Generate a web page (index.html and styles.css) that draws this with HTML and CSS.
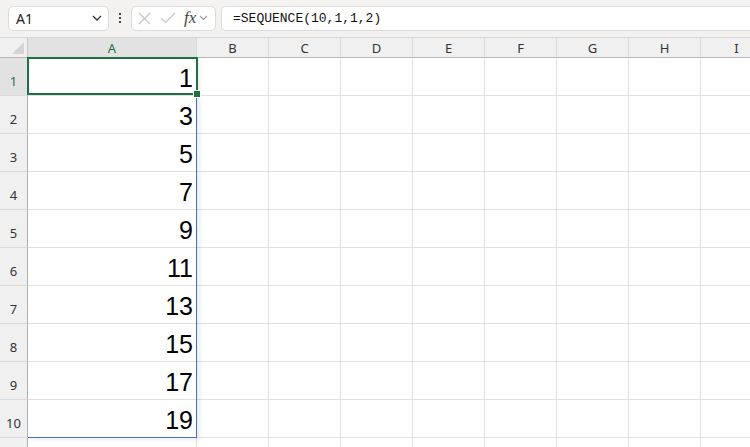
FILE: index.html
```html
<!DOCTYPE html>
<html lang="en">
<head>
    <meta charset="UTF-8">
    <title>Book1 - Sheet1</title>
    <link rel="stylesheet" href="styles.css">
</head>
<body>
    <!-- Name box, function buttons and formula input -->
    <div class="formula-bar">
        <div class="name-box">
            <span>A1</span>
            <svg class="chev" width="10" height="6" viewBox="0 0 10 6"><path d="M1 1l4 4 4-4" fill="none" stroke="#333" stroke-width="1.3"/></svg>
        </div>
        <div class="more">
            <i></i><i></i><i></i>
        </div>
        <div class="fx-box">
            <svg width="13" height="13" viewBox="0 0 13 13"><path d="M1 1l11 11M12 1L1 12" stroke="#c4c4c4" stroke-width="1.2"/></svg>
            <svg width="16" height="12" viewBox="0 0 16 12"><path d="M1 6l4.5 4.5L15 1" fill="none" stroke="#c4c4c4" stroke-width="1.2"/></svg>
            <span class="fx">fx</span>
            <svg width="9" height="6" viewBox="0 0 9 6"><path d="M1 1l3.5 3.5L8 1" fill="none" stroke="#999" stroke-width="1.1"/></svg>
        </div>
        <div class="formula-input">=SEQUENCE(10,1,1,2)</div>
    </div>

    <!-- Sheet grid -->
    <div class="sheet" id="sheet"></div>

    <script>
        const columns = ['A', 'B', 'C', 'D', 'E', 'F', 'G', 'H', 'I'];
        const rowCount = 11;
        const sheet = document.getElementById('sheet');

        // =SEQUENCE(10,1,1,2)
        const values = [];
        for (let i = 0; i < 10; i++) values.push(1 + i * 2);

        // header row
        let html = '<div class="corner"><span class="tri"></span></div>';
        columns.forEach(col => {
            const sel = col === 'A' ? ' selected' : '';
            html += `<div class="col-head${sel}">${col}</div>`;
        });

        for (let r = 1; r <= rowCount; r++) {
            const sel = r === 1 ? ' selected' : '';
            html += `<div class="row-head${sel}">${r}</div>`;
            columns.forEach(col => {
                if (col === 'A') {
                    const v = values[r - 1];
                    if (r === 1) {
                        html += `<div class="cell num active">${v}<span class="spill"></span><span class="select"><span class="handle"></span></span></div>`;
                    } else {
                        html += `<div class="cell num">${v !== undefined ? v : ''}</div>`;
                    }
                } else {
                    html += '<div class="cell"></div>';
                }
            });
        }
        sheet.innerHTML = html;
    </script>
</body>
</html>
```

FILE: styles.css
```css
body {
    margin: 0;
    height: 447px;
    overflow: hidden;
    background-color: #ffffff;
    font-family: 'Noto Sans', 'Open Sans', sans-serif;
    color: #333;
}

/* top bar */
.formula-bar {
    height: 38px;
    box-sizing: border-box;
    background-color: #f4f1f1;
    display: flex;
    align-items: center;
    padding-left: 8px;
    padding-bottom: 1px;
    border-bottom: 1px solid #d6d6d6;
}
.name-box {
    width: 101px;
    height: 25px;
    box-sizing: border-box;
    background-color: #ffffff;
    border: 1px solid #dcdcdc;
    border-radius: 5px;
    display: flex;
    align-items: center;
    justify-content: space-between;
    padding: 0 6px 0 7px;
    font-size: 14px;
    color: #222;
}
.more {
    width: 22px;
    display: flex;
    flex-direction: column;
    align-items: center;
    gap: 2px;
}
.more i {
    display: block;
    width: 2px;
    height: 2px;
    background-color: #444;
}
.fx-box {
    width: 85px;
    height: 25px;
    box-sizing: border-box;
    background-color: #ffffff;
    border: 1px solid #dcdcdc;
    border-radius: 5px;
    display: flex;
    align-items: center;
    padding-left: 6px;
    gap: 9px;
}
.fx-box .fx {
    font-family: 'Liberation Serif', serif;
    font-style: italic;
    font-size: 17px;
    color: #444;
    margin-left: -1px;
    margin-right: -6px;
}
.formula-input {
    flex: 1;
    height: 25px;
    box-sizing: border-box;
    margin-left: 5px;
    background-color: #ffffff;
    border: 1px solid #dcdcdc;
    border-right: none;
    border-radius: 5px 0 0 5px;
    font-family: 'Liberation Mono', monospace;
    font-size: 13px;
    color: #111;
    display: flex;
    align-items: center;
    padding-left: 11px;
}

/* grid */
.sheet {
    display: grid;
    grid-template-columns: 28px 169px repeat(8, 72px);
    grid-template-rows: 20px repeat(11, 38px);
}
.corner, .col-head, .row-head {
    background-color: #f0f0f0;
    box-sizing: border-box;
    font-size: 13px;
    color: #333;
}
.corner {
    position: relative;
    border-right: 1px solid #c8c8c8;
    border-bottom: 1px solid #b8b8b8;
}
.corner .tri {
    position: absolute;
    right: 3px;
    bottom: 3px;
    width: 0;
    height: 0;
    border-left: 12px solid transparent;
    border-bottom: 12px solid #d4d4d4;
}
.col-head {
    border-right: 1px solid #d8d8d8;
    border-bottom: 1px solid #b8b8b8;
    display: flex;
    align-items: center;
    justify-content: center;
}
.row-head {
    border-right: 1px solid #b0b0b0;
    border-bottom: 1px solid #dadada;
    display: flex;
    align-items: flex-end;
    justify-content: center;
    padding-bottom: 5px;
    line-height: 18px;
}
.col-head.selected, .row-head.selected {
    background-color: #e2e2e2;
    color: #1e7145;
}
.cell {
    box-sizing: border-box;
    border-right: 1px solid #e1e1e1;
    border-bottom: 1px solid #e1e1e1;
}
.num {
    display: flex;
    align-items: flex-end;
    justify-content: flex-end;
    font-family: 'Liberation Sans', Arial, sans-serif;
    font-size: 25px;
    line-height: 25px;
    color: #000;
    padding: 0 3px 4px 0;
}

/* spilled range and selection */
.active {
    position: relative;
}
.spill {
    position: absolute;
    top: 0;
    left: 0;
    right: -1px;
    height: 380px;
    box-sizing: border-box;
    border-right: 1px solid #3f6fcf;
    border-bottom: 1px solid #3f6fcf;
    box-shadow: 3px 2px 5px rgba(0, 0, 0, 0.08);
}
.select {
    position: absolute;
    top: -1px;
    left: -1px;
    right: -2px;
    bottom: 0;
    border: 2px solid #1e7145;
}
.handle {
    position: absolute;
    right: -5px;
    bottom: -5px;
    width: 6px;
    height: 6px;
    background-color: #1e7145;
    border: 1px solid #ffffff;
}
```
